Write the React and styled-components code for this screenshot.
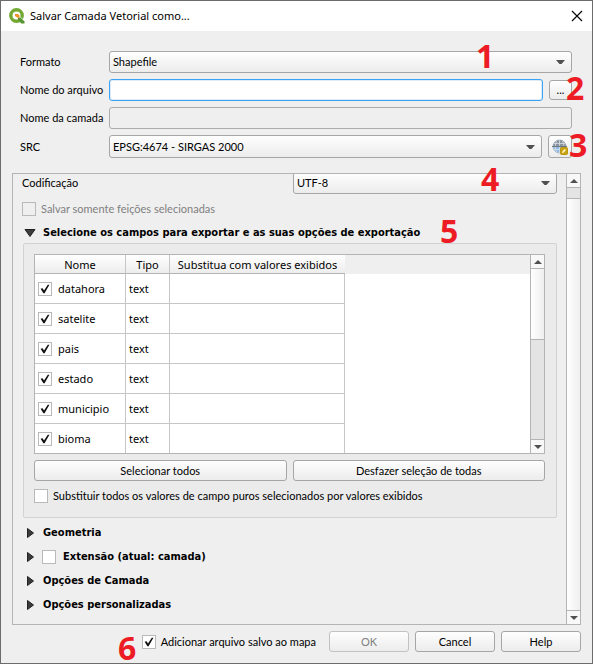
import React, { useState } from "react";
import styled, { createGlobalStyle } from "styled-components";

const line = "#b4b4b4";
const uiFont = 'Lato, "DejaVu Sans Condensed", sans-serif';
const headingFont = '"DejaVu Sans Condensed", "DejaVu Sans", sans-serif';
const tableFont = '"Noto Sans", "Open Sans", sans-serif';

const GlobalStyle = createGlobalStyle`
  *, *::before, *::after { box-sizing: border-box; }
  body { margin: 0; background: #efefef; }
  button, input, select { font: inherit; color: inherit; margin: 0; }
`;

const Dialog = styled.main`
  position: relative;
  display: flex;
  flex-direction: column;
  min-height: 100vh;
  border: 1px solid #6c6c6c;
  background: #efefef;
  color: #000;
  font: 11px/14px ${uiFont};
`;

const TitleBar = styled.header`
  display: flex;
  align-items: center;
  gap: 5px;
  height: 30px;
  padding: 0 9px 0 8px;
  background: #fff;
`;

const Title = styled.h1`
  flex: 1;
  margin: 0;
  font: 11px/16px ${tableFont};
`;

const CloseButton = styled.button`
  display: grid;
  place-items: center;
  padding: 0;
  border: 0;
  background: none;
`;

const Form = styled.form`
  display: grid;
  grid-template-columns: 83px 1fr;
  align-items: center;
  gap: 6px;
  padding: 20px 20px 0 19px;
  white-space: nowrap;
`;

const FieldRow = styled.div`
  display: flex;
  align-items: center;
  gap: 6px;
  min-width: 0;
`;

const TextField = styled.input`
  flex: 1;
  min-width: 0;
  height: 22px;
  padding: 0 4px;
  border: 1px solid ${(p) => (p.$active ? "#3ba3f5" : "#acacac")};
  border-radius: 3px;
  background: ${(p) => (p.disabled ? "#efefef" : "#fff")};
  box-shadow: ${(p) => (p.$active ? "inset 0 0 0 1px #dcebf7" : "none")};
  outline: none;
`;

const ComboWrap = styled.div`
  position: relative;
  flex: 1;
  min-width: 0;
`;

const Combo = styled.select`
  display: block;
  width: 100%;
  height: ${(p) => p.$height || 22}px;
  padding: 0 24px 0 3px;
  appearance: none;
  border: 1px solid #a6a6a6;
  border-radius: 3px;
  background: linear-gradient(#fefefe, #ececec);
  outline: none;
`;

const ComboArrow = styled.svg`
  position: absolute;
  right: 7px;
  top: 50%;
  margin-top: -2px;
  pointer-events: none;
`;

const PushButton = styled.button`
  display: flex;
  align-items: center;
  justify-content: center;
  flex: ${(p) => (p.$grow ? "1" : "none")};
  width: ${(p) => (p.$width ? `${p.$width}px` : "auto")};
  height: ${(p) => p.$height || 21}px;
  padding: 0;
  border: 1px solid #a6a6a6;
  border-radius: 3px;
  background: linear-gradient(#fefefe, #ececec);
  &:disabled { color: #808080; border-color: #c2c2c2; }
`;

const ScrollArea = styled.section`
  display: flex;
  flex: 1;
  margin: 15px 11px 0;
  border: 1px solid ${line};
  overflow: hidden;
`;

const Options = styled.div`
  flex: 1;
  min-width: 0;
  padding: 0 9px 4px;
`;

const EncodingRow = styled.div`
  display: grid;
  grid-template-columns: 271px 1fr;
  align-items: center;
  margin-top: -2px;
`;

const CheckLabel = styled.label`
  display: flex;
  align-items: center;
  gap: ${(p) => p.$gap || 5}px;
  color: ${(p) => (p.$muted ? "#808080" : "inherit")};
`;

const SelectedOnly = styled.div`
  padding: 8px 0 10px;
`;

const CheckHolder = styled.span`
  position: relative;
  display: block;
  flex: none;
  width: 14px;
  height: 14px;
`;

const CheckInput = styled.input`
  display: block;
  width: 14px;
  height: 14px;
  appearance: none;
  border: 1px solid #b9b9b9;
  background: #fff;
  &:disabled { background: #efefef; }
`;

const CheckMark = styled.svg`
  position: absolute;
  inset: 0;
  pointer-events: none;
`;

const SectionHeader = styled.div`
  display: flex;
  align-items: center;
  gap: 6px;
  height: ${(p) => (p.$first ? "14px" : "24px")};
  padding-left: 2px;
  font-family: ${headingFont};
  font-weight: bold;
`;

const SectionToggle = styled.button`
  display: flex;
  align-items: center;
  gap: 7px;
  padding: 0;
  border: 0;
  background: none;
`;

const FieldGroup = styled.div`
  margin: 3px 0 3px 1px;
  padding: 10px 11px 14px 10px;
  border: 1px solid #d2d2d2;
  border-radius: 2px;
  background: #ebebeb;
`;

const TableFrame = styled.div`
  display: flex;
  height: 200px;
  border: 1px solid ${line};
  background: #fff;
  overflow: hidden;
`;

const TableView = styled.div`
  flex: 1;
  min-width: 0;
  overflow: hidden;
`;

const FieldTable = styled.table`
  width: 100%;
  table-layout: fixed;
  border-collapse: separate;
  border-spacing: 0;
  font: 11px/16px ${tableFont};
`;

const Col = styled.col`
  width: ${(p) => (p.$width ? `${p.$width}px` : "auto")};
`;

const HeadCell = styled.th`
  height: 19px;
  padding: 2px 0 0;
  font-weight: normal;
  white-space: nowrap;
  border-right: ${(p) => (p.$line ? "1px solid #c6c6c6" : "0")};
  border-bottom: ${(p) => (p.$blank ? "0" : `1px solid ${line}`)};
  background: ${(p) => (p.$blank ? "#efefef" : "linear-gradient(#fff, #ededed)")};
`;

const Cell = styled.td`
  height: 30px;
  padding: 0 0 0 3px;
  border-right: ${(p) => (p.$blank ? "0" : "1px solid #c6c6c6")};
  border-bottom: ${(p) => (p.$blank ? "0" : "1px solid #c6c6c6")};
`;

const Track = styled.div`
  display: flex;
  flex-direction: column;
  flex: none;
  width: 14px;
  border-left: 1px solid ${line};
  background: #e4e4e4;
`;

const TrackButton = styled.button`
  display: grid;
  place-items: center;
  flex: none;
  height: 14px;
  padding: 0;
  border: 0;
  border-bottom: ${(p) => (p.$end ? "0" : `1px solid ${line}`)};
  border-top: ${(p) => (p.$end ? `1px solid ${line}` : "0")};
  background: #f8f8f8;
`;

const TrackGap = styled.div`
  flex: ${(p) => (p.$height ? `0 0 ${p.$height}px` : "1")};
`;

const Handle = styled.div`
  flex: ${(p) => (p.$height ? `0 0 ${p.$height}px` : "1")};
  border-top: ${(p) => (p.$top ? `1px solid ${line}` : "0")};
  border-bottom: ${(p) => (p.$bottom ? `1px solid ${line}` : "0")};
  background: linear-gradient(90deg, #fff, #efefef);
`;

const ButtonPair = styled.div`
  display: flex;
  gap: 6px;
  margin: 6px 0 8px;
`;

const Footer = styled.footer`
  display: flex;
  align-items: center;
  justify-content: flex-end;
  gap: 6px;
  padding: 6px 11px 11px;
`;

const FooterCheck = styled.div`
  margin-right: 7px;
`;

const Marker = styled.span`
  position: absolute;
  left: ${(p) => p.$x}px;
  top: ${(p) => p.$y}px;
  color: #ed1c24;
  font: bold 32px/32px "Noto Sans", "Open Sans", sans-serif;
  pointer-events: none;
`;

const fields = ["datahora", "satelite", "pais", "estado", "municipio", "bioma"];

const markers = [
  { text: "1", x: 475, y: 39 },
  { text: "2", x: 565, y: 71 },
  { text: "3", x: 568, y: 128 },
  { text: "4", x: 480, y: 162 },
  { text: "5", x: 439, y: 214 },
  { text: "6", x: 117, y: 631 },
];

function Logo() {
  return (
    <svg width="16" height="16" viewBox="0 0 16 16" aria-hidden="true">
      <circle cx="7.5" cy="7.5" r="5.7" fill="none" stroke="#73a832" strokeWidth="3.4" />
      <path d="M8 9.500L10 7.500L16 13V16H12.500z" fill="#fff" />
      <path d="M9 9.500h2.500l4 4v2h-3.200L9 12z" fill="#589632" />
      <path d="M6 6h3L10.500 7.500V9.500L9 10L6 8z" fill="#f0932a" />
    </svg>
  );
}

function Arrow({ up }) {
  return (
    <svg width="8" height="4" viewBox="0 0 8 4" aria-hidden="true">
      <path d={up ? "M0 4L4 0L8 4Z" : "M0 0H8L4 4Z"} fill="#505050" />
    </svg>
  );
}

function Triangle({ open }) {
  return open ? (
    <svg width="12" height="8" viewBox="0 0 12 8" aria-hidden="true">
      <path d="M1 .5h10L6 7.500z" fill="#3c3c3c" stroke="#222" />
    </svg>
  ) : (
    <svg width="12" height="12" viewBox="0 0 12 12" aria-hidden="true">
      <path d="M3.500 1.500v9L9.500 6z" fill="#3c3c3c" stroke="#222" />
    </svg>
  );
}

function Globe() {
  return (
    <svg width="16" height="16" viewBox="0 0 16 16" aria-hidden="true">
      <circle cx="7.500" cy="7.500" r="6.500" fill="#8fbbe6" stroke="#a9b9c8" />
      <path d="M1 7.500a6.500 6.500 0 0 1 13 0z" fill="#8b949c" />
      <path
        d="M1.500 4.500h12M1.500 10.500h10M7.500 1v13M4.500 2C3 5 3 10 4.500 13M10.500 2c1.500 3 1.500 6 1 8"
        fill="none"
        stroke="#d7dfe6"
        strokeWidth=".8"
      />
      <path d="M0 7.500h15" stroke="#6d7780" />
      <rect x="8.500" y="8.500" width="7" height="7" rx="1" fill="#c9a313" stroke="#b9960c" />
      <path d="M10 14l.6-2L13 10l1 1-2.200 2.400z" fill="#fff4c2" />
    </svg>
  );
}

function Checkbox({ defaultChecked = false, ...rest }) {
  const [on, setOn] = useState(defaultChecked);
  return (
    <CheckHolder>
      <CheckInput type="checkbox" checked={on} onChange={(e) => setOn(e.target.checked)} {...rest} />
      {on && (
        <CheckMark width="14" height="14" viewBox="0 0 14 14" aria-hidden="true">
          <path d="M2.600 6.800L4.600 6.200L6 8.600L9.800 2.800H11.400L6.600 11.200H5.400Z" fill="#111" />
        </CheckMark>
      )}
    </CheckHolder>
  );
}

function ComboBox({ value, ...rest }) {
  return (
    <ComboWrap>
      <Combo defaultValue={value} {...rest}>
        <option>{value}</option>
      </Combo>
      <ComboArrow width="9" height="5" viewBox="0 0 9 5" aria-hidden="true">
        <path d="M0 0H9L5.500 4H3.500Z" fill="#505050" />
      </ComboArrow>
    </ComboWrap>
  );
}

function Section({ title, open, first }) {
  return (
    <SectionHeader $first={first}>
      <SectionToggle type="button" aria-expanded={!!open}>
        <Triangle open={open} />
        {title}
      </SectionToggle>
    </SectionHeader>
  );
}

export default function App() {
  return (
    <>
      <GlobalStyle />
      <Dialog>
        <TitleBar>
          <Logo />
          <Title>Salvar Camada Vetorial como...</Title>
          <CloseButton type="button" aria-label="Fechar">
            <svg width="12" height="12" viewBox="0 0 12 12" aria-hidden="true">
              <path d="M1 1l10 10M11 1L1 11" stroke="#000" strokeWidth="1.100" />
            </svg>
          </CloseButton>
        </TitleBar>

        <Form>
          <label htmlFor="format">Formato</label>
          <ComboBox id="format" value="Shapefile" />
          <label htmlFor="file">Nome do arquivo</label>
          <FieldRow>
            <TextField id="file" type="text" $active />
            <PushButton type="button" $width={23} $height={20}>...</PushButton>
          </FieldRow>
          <label htmlFor="layer">Nome da camada</label>
          <FieldRow>
            <TextField id="layer" type="text" disabled />
          </FieldRow>
          <label htmlFor="crs">SRC</label>
          <FieldRow>
            <ComboBox id="crs" value="EPSG:4674 - SIRGAS 2000" $height={23} />
            <PushButton type="button" $width={24} $height={23} aria-label="Selecionar SRC">
              <Globe />
            </PushButton>
          </FieldRow>
        </Form>

        <ScrollArea>
          <Options>
            <EncodingRow>
              <label htmlFor="encoding">Codificação</label>
              <ComboBox id="encoding" value="UTF-8" />
            </EncodingRow>
            <SelectedOnly>
              <CheckLabel $muted>
                <Checkbox disabled />
                Salvar somente feições selecionadas
              </CheckLabel>
            </SelectedOnly>

            <Section first open title="Selecione os campos para exportar e as suas opções de exportação" />
            <FieldGroup>
              <TableFrame>
                <TableView>
                  <FieldTable>
                    <colgroup>
                      <Col $width={91} />
                      <Col $width={44} />
                      <Col $width={175} />
                      <Col />
                    </colgroup>
                    <thead>
                      <tr>
                        <HeadCell scope="col" $line>Nome</HeadCell>
                        <HeadCell scope="col" $line>Tipo</HeadCell>
                        <HeadCell scope="col">Substitua com valores exibidos</HeadCell>
                        <HeadCell as="td" $blank />
                      </tr>
                    </thead>
                    <tbody>
                      {fields.map((name) => (
                        <tr key={name}>
                          <Cell>
                            <CheckLabel $gap={6}>
                              <Checkbox defaultChecked />
                              {name}
                            </CheckLabel>
                          </Cell>
                          <Cell>text</Cell>
                          <Cell />
                          <Cell $blank />
                        </tr>
                      ))}
                    </tbody>
                  </FieldTable>
                </TableView>
                <Track>
                  <TrackButton type="button" aria-label="Rolar campos para cima"><Arrow up /></TrackButton>
                  <Handle $height={71} $bottom />
                  <TrackGap />
                  <TrackButton type="button" $end aria-label="Rolar campos para baixo"><Arrow /></TrackButton>
                </Track>
              </TableFrame>
              <ButtonPair>
                <PushButton type="button" $grow>Selecionar todos</PushButton>
                <PushButton type="button" $grow>Desfazer seleção de todas</PushButton>
              </ButtonPair>
              <CheckLabel>
                <Checkbox />
                Substituir todos os valores de campo puros selecionados por valores exibidos
              </CheckLabel>
            </FieldGroup>

            <Section title="Geometria" />
            <SectionHeader>
              <SectionToggle type="button" aria-expanded={false} aria-label="Extensão">
                <Triangle />
              </SectionToggle>
              <CheckLabel $gap={7}>
                <Checkbox />
                Extensão (atual: camada)
              </CheckLabel>
            </SectionHeader>
            <Section title="Opções de Camada" />
            <Section title="Opções personalizadas" />
          </Options>
          <Track>
            <TrackButton type="button" aria-label="Rolar para cima"><Arrow up /></TrackButton>
            <TrackGap $height={10} />
            <Handle $top />
            <TrackButton type="button" $end aria-label="Rolar para baixo"><Arrow /></TrackButton>
          </Track>
        </ScrollArea>

        <Footer>
          <FooterCheck>
            <CheckLabel>
              <Checkbox defaultChecked />
              Adicionar arquivo salvo ao mapa
            </CheckLabel>
          </FooterCheck>
          <PushButton type="button" $width={80} disabled>OK</PushButton>
          <PushButton type="button" $width={80}>Cancel</PushButton>
          <PushButton type="button" $width={80}>Help</PushButton>
        </Footer>

        {markers.map((m) => (
          <Marker key={m.text} $x={m.x} $y={m.y}>{m.text}</Marker>
        ))}
      </Dialog>
    </>
  );
}
